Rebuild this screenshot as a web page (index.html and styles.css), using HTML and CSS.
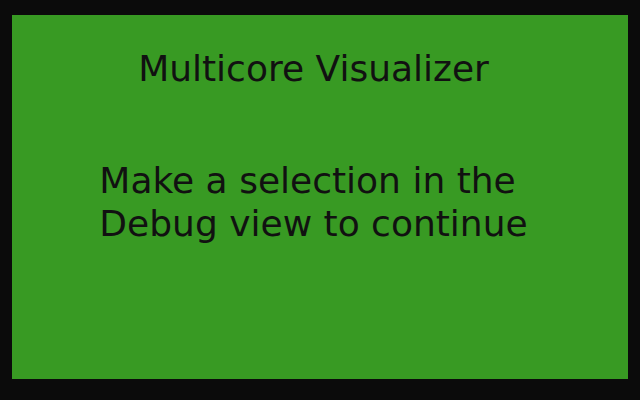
FILE: index.html
```html
<!DOCTYPE html>
<html>
<head>
<meta charset="utf-8">
<link rel="stylesheet" href="styles.css">
</head>
<body>
<div class="frame">
  <div class="panel">
    <div class="title">Multicore Visualizer</div>
    <div class="message">Make a selection in the<br>Debug view to continue</div>
  </div>
</div>
</body>
</html>
```
FILE: styles.css
```css
html, body {
  margin: 0;
  padding: 0;
  background: #0b0b0b;
}
.frame {
  width: 640px;
  height: 400px;
  box-sizing: border-box;
  padding: 15px 12px 21px 12px;
  display: flex;
}
.panel {
  flex: 1;
  background: #389a23;
  color: #111111;
  font-family: "DejaVu Sans", sans-serif;
  font-size: 36px;
  display: flex;
  flex-direction: column;
  align-items: center;
  padding-right: 13px;
}
.title {
  margin-top: 34px;
  line-height: 40px;
}
.message {
  margin-top: 70px;
  line-height: 43px;
  text-align: left;
}
```
